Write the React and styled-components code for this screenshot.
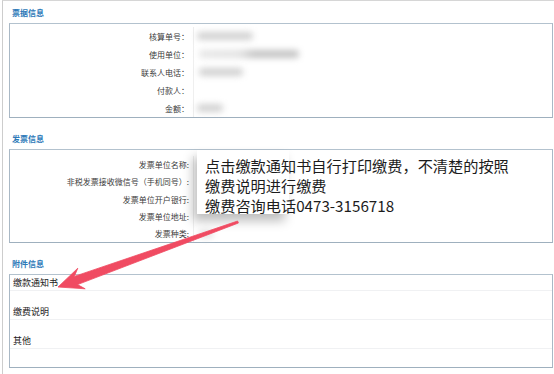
import React from "react";
import styled, { createGlobalStyle } from "styled-components";

const GlobalStyle = createGlobalStyle`
  html, body { margin: 0; padding: 0; background: #ffffff; }
  body { font-family: "Noto Sans CJK SC", "Microsoft YaHei", sans-serif; }
`;

const Page = styled.div`
  position: relative;
  height: 373px;
  margin-left: 2px;
  border-top: 1px solid #d6d6d6;
  border-left: 1px solid #cdcdcd;
  overflow: hidden;
`;

const Section = styled.section`
  padding: 0 1px 0 6px;
  & + & { margin-top: 9px; }
`;

const SectionTitle = styled.div`
  padding: 5px 0 3px 3px;
  font-size: 8px;
  line-height: 14px;
  font-weight: 700;
  color: #2d79b8;
`;

const Panel = styled.div`
  border: 1px solid #a9b8c5;
  border-top-color: #b3c2ce;
  border-bottom-color: #9fb0be;
  padding: ${(p) => p.$pad || "0"};
`;

const FieldList = styled.div`
  display: grid;
  grid-template-columns: 183px 1fr;
  grid-auto-rows: ${(p) => p.$row}px;
  background: linear-gradient(to right, transparent 183px, #efefef 183px, #efefef 184px, transparent 184px);
`;

const Label = styled.div`
  display: flex;
  align-items: center;
  justify-content: flex-end;
  padding-right: 4px;
  font-size: 8px;
  color: #3a3a3a;
  white-space: nowrap;
`;

const Value = styled.div`
  display: flex;
  align-items: center;
  padding-left: ${(p) => p.$indent || 4}px;
`;

const Blur = styled.span`
  display: block;
  width: ${(p) => p.$w}px;
  height: 8px;
  border-radius: 4px;
  background: ${(p) => p.$bg || "#d2d2d2"};
  filter: blur(3px);
`;

const AttachItem = styled.div`
  height: 29px;
`;

const AttachLabel = styled.div`
  height: 15px;
  padding-left: 3px;
  border-bottom: 1px solid #f0f1f3;
  font-size: 9px;
  line-height: 15px;
  color: #222;
`;

const ShadowCard = styled.div`
  position: absolute;
  left: 194px;
  top: 149px;
  width: 92px;
  height: 64px;
  background: #fff;
  box-shadow: -4px 7px 10px rgba(0, 0, 0, 0.26);
`;

const Note = styled.div`
  position: absolute;
  left: 202px;
  top: 154px;
  font-size: 15.2px;
  line-height: 20px;
  color: #1c1c1c;
  white-space: nowrap;
`;

const ArrowLayer = styled.svg`
  position: absolute;
  left: 0;
  top: 0;
  pointer-events: none;
`;

const billRows = [
  { label: "核算单号：", blur: 56 },
  { label: "使用单位：", blur: 100, bg: "linear-gradient(to right, #e6e6e6 0%, #e2e2e2 40%, #c4c4c4 55%, #c4c4c4 100%)", indent: 6 },
  { label: "联系人电话：", blur: 44, indent: 6 },
  { label: "付款人：" },
  { label: "金额：", blur: 26 },
];

const invoiceRows = [
  { label: "发票单位名称:" },
  { label: "非税发票接收微信号（手机同号）:" },
  { label: "发票单位开户银行:" },
  { label: "发票单位地址:" },
  { label: "发票种类:", blur: 14, bg: "#e2e2e2", indent: 6 },
];

const attachments = ["缴款通知书", "缴费说明", "其他"];

function Fields({ rows, row }) {
  return (
    <FieldList $row={row}>
      {rows.map((r) => (
        <React.Fragment key={r.label}>
          <Label>{r.label}</Label>
          <Value $indent={r.indent}>{r.blur ? <Blur $w={r.blur} $bg={r.bg} /> : null}</Value>
        </React.Fragment>
      ))}
    </FieldList>
  );
}

export default function App() {
  return (
    <>
      <GlobalStyle />
      <Page>
        <Section>
          <SectionTitle>票据信息</SectionTitle>
          <Panel $pad="3px 0 0 0">
            <Fields rows={billRows} row={18} />
          </Panel>
        </Section>
        <Section>
          <SectionTitle>发票信息</SectionTitle>
          <Panel $pad="6px 0 0 0">
            <Fields rows={invoiceRows} row={17.3} />
          </Panel>
        </Section>
        <Section>
          <SectionTitle>附件信息</SectionTitle>
          <Panel $pad="0 0 5px 0">
            {attachments.map((a) => (
              <AttachItem key={a}>
                <AttachLabel>{a}</AttachLabel>
              </AttachItem>
            ))}
          </Panel>
        </Section>

        <ShadowCard />
        <Note>
          点击缴款通知书自行打印缴费，不清楚的按照
          <br />
          缴费说明进行缴费
          <br />
          缴费咨询电话0473-3156718
        </Note>
        <ArrowLayer width="554" height="374" viewBox="3 1 554 374">
          <polygon
            points="58,287 77.8,268.2 74.3,276.4 237.6,221 238.4,223 77.5,284.6 85.2,288.8"
            fill="#f04b62"
            stroke="#f04b62"
            strokeWidth="0.8"
            strokeLinejoin="round"
          />
        </ArrowLayer>
      </Page>
    </>
  );
}
